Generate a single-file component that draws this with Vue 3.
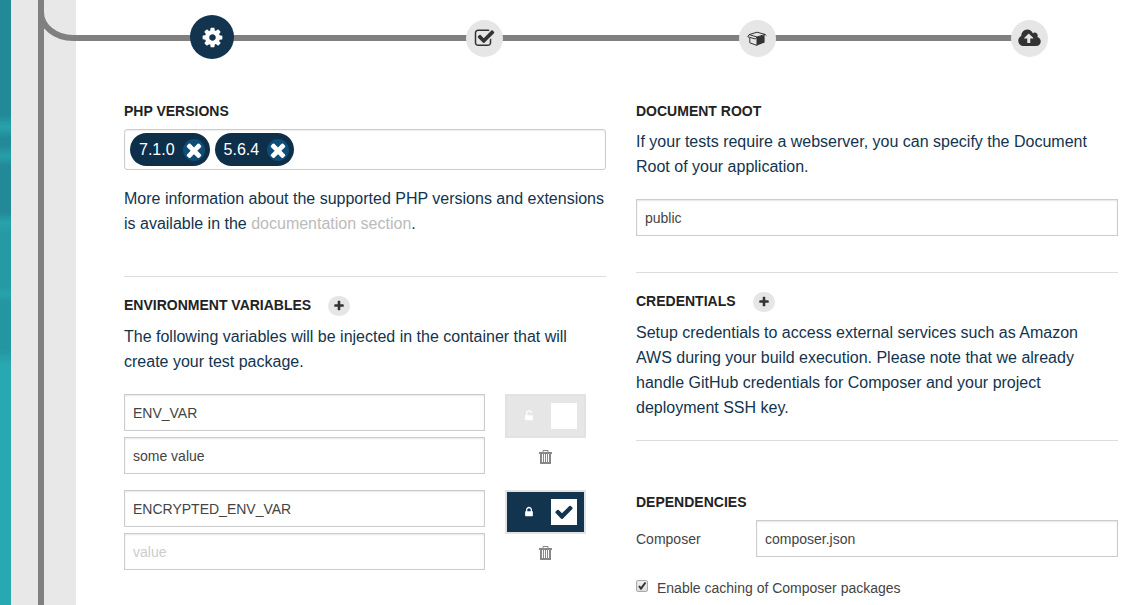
<script setup>
import { ref } from 'vue'

const icons = {
  cog: 'M1152 896q0-106-75-181t-181-75-181 75-75 181 75 181 181 75 181-75 75-181zm512-109v222q0 12-8 23t-20 13l-185 28q-19 54-39 91 35 50 107 138 10 12 10 25t-9 23q-27 37-99 108t-94 71q-12 0-26-9l-138-108q-44 23-91 38-16 136-29 186-7 28-36 28h-222q-14 0-24.5-8.5t-11.5-21.5l-28-184q-49-16-90-37l-141 107q-10 9-25 9-14 0-25-11-126-114-165-168-7-10-7-23 0-12 8-23 15-21 51-66.5t54-70.5q-27-50-41-99l-183-27q-13-2-21-12.5t-8-23.5v-222q0-12 8-23t19-13l186-28q14-46 39-92-40-57-107-138-10-12-10-24 0-10 9-23 26-36 98.5-107.5t94.5-71.5q13 0 26 10l138 107q44-23 91-38 16-136 29-186 7-28 36-28h222q14 0 24.5 8.5t11.5 21.5l28 184q49 16 90 37l142-107q9-9 24-9 13 0 25 10 129 119 165 170 7 8 7 22 0 12-8 23-15 21-51 66.5t-54 70.5q26 50 41 98l183 28q13 2 21 12.5t8 23.5z',
  checkSquare: 'M1472 930v318q0 119-84.5 203.5t-203.5 84.5h-832q-119 0-203.5-84.5t-84.5-203.5v-832q0-119 84.5-203.5t203.5-84.5h832q63 0 117 25 15 7 18 23 3 17-9 29l-49 49q-10 10-23 10-3 0-9-2-23-6-45-6h-832q-66 0-113 47t-47 113v832q0 66 47 113t113 47h832q66 0 113-47t47-113v-254q0-13 9-22l64-64q10-10 23-10 6 0 12 3 20 8 20 29zm231-489l-814 814q-24 24-57 24t-57-24l-430-430q-24-24-24-57t24-57l110-110q24-24 57-24t57 24l263 263 647-647q24-24 57-24t57 24l110 110q24 24 24 57t-24 57z',
  cloud: 'M1216 864q0-14-9-23l-352-352q-9-9-23-9t-23 9l-351 351q-10 12-10 24 0 14 9 23t23 9h224v352q0 13 9.5 22.5t22.5 9.5h192q13 0 22.5-9.5t9.5-22.5v-352h224q13 0 22.5-9.5t9.5-22.5zm640 288q0 159-112.5 271.5t-271.5 112.5h-1088q-185 0-316.5-131.5t-131.5-316.5q0-130 70-240t188-165q-2-30-2-43 0-212 150-362t362-150q156 0 285.5 87t188.5 231q71-62 166-62 106 0 181 75t75 181q0 76-41 138 130 31 213.5 135.5t83.5 238.5z',
  times: 'M1490 1322q0 40-28 68l-136 136q-28 28-68 28t-68-28l-294-294-294 294q-28 28-68 28t-68-28l-136-136q-28-28-28-68t28-68l294-294-294-294q-28-28-28-68t28-68l136-136q28-28 68-28t68 28l294 294 294-294q28-28 68-28t68 28l136 136q28 28 28 68t-28 68l-294 294 294 294q28 28 28 68z',
  check: 'M1671 566q0 40-28 68l-724 724-136 136q-28 28-68 28t-68-28l-136-136-362-362q-28-28-28-68t28-68l136-136q28-28 68-28t68 28l294 295 656-657q28-28 68-28t68 28l136 136q28 28 28 68z',
  plus: 'M1600 736v192q0 40-28 68t-68 28h-416v416q0 40-28 68t-68 28h-192q-40 0-68-28t-28-68v-416h-416q-40 0-68-28t-28-68v-192q0-40 28-68t68-28h416v-416q0-40 28-68t68-28h192q40 0 68 28t28 68v416h416q40 0 68 28t28 68z',
  lock: 'M640 768h512v-192q0-106-75-181t-181-75-181 75-75 181v192zm832 96v576q0 40-28 68t-68 28h-960q-40 0-68-28t-28-68v-576q0-40 28-68t68-28h32v-192q0-184 132-316t316-132 316 132 132 316v192h32q40 0 68 28t28 68z',
  unlock: 'M1376 768q40 0 68 28t28 68v576q0 40-28 68t-68 28h-960q-40 0-68-28t-28-68v-576q0-40 28-68t68-28h32v-292q0-184 132-316t316-132 316 132 132 316h-192q0-106-75-181t-181-75-181 75-75 181v292h736z'
}

const versions = ref(['7.1.0', '5.6.4'])
const variables = ref([
  { name: 'ENV_VAR', value: 'some value', encrypted: false },
  { name: 'ENCRYPTED_ENV_VAR', value: '', encrypted: true }
])
const documentRoot = ref('public')
const composerFile = ref('composer.json')
const caching = ref(true)

const addVariable = () => variables.value.push({ name: '', value: '', encrypted: false })
</script>

<template>
  <div class="page">
    <div class="backdrop"></div>
    <div class="rail"></div>
    <main class="main">
      <nav class="stepper" aria-label="Setup steps">
        <svg class="bend" width="38" height="41" viewBox="0 0 38 41" aria-hidden="true">
          <path d="M3 0V12A32 26 0 0 0 35 38H38" fill="none" stroke="#808080" stroke-width="6" />
        </svg>
        <button class="step active" type="button" aria-label="Settings">
          <svg width="23" height="23" viewBox="0 0 1792 1792"><path :d="icons.cog" /></svg>
        </button>
        <button class="step" type="button" aria-label="Tests">
          <svg width="21" height="21" viewBox="0 0 1792 1792"><path :d="icons.checkSquare" /></svg>
        </button>
        <button class="step" type="button" aria-label="Package">
          <svg width="20" height="16" viewBox="0 0 20 16">
            <path d="M10 6 17.600 4V11.400L10 14.600z" />
            <path d="M2.800 7V11.800L10 14.400V6L2.200 3.600 10 1.200 18 3.400 10 6M2.200 3.600.800 5.800 8.400 8 10 6M18 3.400 19.400 4.600" fill="none" stroke="#333" stroke-width="1" stroke-linejoin="round" />
          </svg>
        </button>
        <button class="step" type="button" aria-label="Deployment">
          <svg width="23" height="21" viewBox="-64 0 1920 1792"><path :d="icons.cloud" /></svg>
        </button>
      </nav>

      <div class="columns">
        <div class="column">
          <section>
            <div class="head"><h2>PHP VERSIONS</h2></div>
            <div class="tags">
              <span v-for="(v, i) in versions" :key="v" class="tag">
                {{ v }}
                <button type="button" :aria-label="'Remove ' + v" @click="versions.splice(i, 1)">
                  <svg width="22" height="22" viewBox="0 0 1792 1792"><path :d="icons.times" /></svg>
                </button>
              </span>
            </div>
            <p class="note">
              More information about the supported PHP versions and extensions is available in the
              <a href="#docs">documentation section</a>.
            </p>
          </section>
          <section class="ruled env">
            <div class="head">
              <h2>ENVIRONMENT VARIABLES</h2>
              <button class="add" type="button" aria-label="Add variable" @click="addVariable">
                <svg width="12" height="12" viewBox="0 0 1792 1792"><path :d="icons.plus" /></svg>
              </button>
            </div>
            <p>The following variables will be injected in the container that will create your test package.</p>
            <div v-for="(item, i) in variables" :key="i" class="variable">
              <div class="fields">
                <input v-model="item.name" class="field" type="text" aria-label="Variable name" placeholder="name">
                <input v-model="item.value" class="field" type="text" aria-label="Variable value" placeholder="value">
              </div>
              <div class="controls">
                <label class="toggle" :class="{ on: item.encrypted }">
                  <svg class="padlock" width="12" height="12" viewBox="0 0 1792 1792">
                    <path :d="item.encrypted ? icons.lock : icons.unlock" />
                  </svg>
                  <span class="square">
                    <input v-model="item.encrypted" type="checkbox" aria-label="Encrypted">
                    <svg v-if="item.encrypted" width="20" height="20" viewBox="0 0 1792 1792"><path :d="icons.check" /></svg>
                  </span>
                </label>
                <button class="remove" type="button" aria-label="Delete variable" @click="variables.splice(i, 1)">
                  <svg width="13" height="14" viewBox="0 0 13 14" fill="none" stroke="#888">
                    <path d="M0 3H13M2 4V13H11V4" stroke-width="2" />
                    <path d="M4 2.500V.500H9V2.500M4.500 4V12M6.500 4V12M8.500 4V12" />
                  </svg>
                </button>
              </div>
            </div>
          </section>
        </div>

        <div class="column">
          <section class="root">
            <div class="head"><h2><label for="root">DOCUMENT ROOT</label></h2></div>
            <p>If your tests require a webserver, you can specify the Document Root of your application.</p>
            <input id="root" v-model="documentRoot" class="field" type="text">
          </section>
          <section class="ruled credentials">
            <div class="head">
              <h2>CREDENTIALS</h2>
              <button class="add" type="button" aria-label="Add credential">
                <svg width="12" height="12" viewBox="0 0 1792 1792"><path :d="icons.plus" /></svg>
              </button>
            </div>
            <p>
              Setup credentials to access external services such as Amazon AWS during your build execution.
              Please note that we already handle GitHub credentials for Composer and your project deployment SSH key.
            </p>
          </section>
          <section class="ruled dependencies">
            <div class="head"><h2>DEPENDENCIES</h2></div>
            <div class="composer">
              <label for="composer">Composer</label>
              <input id="composer" v-model="composerFile" class="field" type="text">
            </div>
            <label class="caching">
              <span class="tick">
                <input v-model="caching" type="checkbox">
                <svg v-if="caching" width="12" height="12" viewBox="0 0 12 12"><path d="M3 6 5 8.500 9.500 2.500" /></svg>
              </span>
              Enable caching of Composer packages
            </label>
          </section>
        </div>
      </div>
    </main>
  </div>
</template>

<style>
html, body { background: #fff; }
</style>

<style scoped>
.page {
  display: flex;
  height: 100vh;
  overflow: hidden;
  font: 14px/20px "Liberation Sans", Arial, sans-serif;
  color: #444;
}
.page * { box-sizing: border-box; }
button { padding: 0; border: 0; background: none; cursor: pointer; }
svg { display: block; }
.backdrop {
  flex: 0 0 11px;
  background: linear-gradient(#228a97 0, #228a97 115px, #27a3ac 127px, #228a97 138px, #228a97 146px, #27a0a9 156px, #228a97 166px, #228a97 212px, #27a3ac 223px, #2599a4 233px, #2599a4 286px, #27a3ac 294px, #2496a1 302px, #2496a1 350px, #28a8b0 364px, #28a8b0 100%);
}
.rail {
  flex: 0 0 65px;
  background: linear-gradient(90deg, #e8e8e8 27px, #808080 27px, #808080 33px, #e8e8e8 33px);
}
.main { flex: 1; min-width: 0; }
.stepper {
  position: relative;
  display: flex;
  justify-content: space-between;
  padding: 15px 89px 0 114px;
}
.stepper::before {
  content: "";
  position: absolute;
  left: 0;
  right: 111px;
  top: 35px;
  height: 6px;
  background: #808080;
}
.bend { position: absolute; left: -38px; top: 0; }
.step {
  position: relative;
  display: flex;
  align-items: center;
  justify-content: center;
  width: 37px;
  height: 37px;
  margin: 5px 3px 2px 4px;
  border-radius: 50%;
  background: #e6e6e6;
  fill: #333;
}
.step.active { width: 44px; height: 44px; margin: 0; background: #12344e; fill: #fff; }
.columns {
  display: grid;
  grid-template-columns: 1fr 1fr;
  gap: 30px;
  padding: 41px 22px 0 48px;
}
.column { min-width: 0; }
.head { display: flex; align-items: center; height: 21px; margin-bottom: 8px; }
h2 { margin: 0; font-size: 14px; line-height: 20px; font-weight: bold; color: #222; }
p { margin: 0 0 20px; font-size: 16px; line-height: 25px; color: #12344e; }
p.note { margin: 16px 0 40px; }
.credentials p { padding-right: 20px; }
a { color: #bbb; text-decoration: none; }
.ruled { border-top: 1px solid #ddd; padding-top: 17px; }
.ruled .head { margin-bottom: 9px; }
.tags {
  display: flex;
  gap: 5px;
  min-height: 41px;
  padding: 3px 5px;
  border: 1px solid #ccc;
  border-radius: 3px;
  box-shadow: inset 0 1px 2px #eee;
}
.tag {
  display: flex;
  align-items: center;
  gap: 8px;
  height: 33px;
  padding: 0 5px 0 9px;
  border-radius: 17px;
  background: #0d2f49;
  color: #fff;
  font-size: 16px;
}
.tag button { width: 22px; height: 22px; border-radius: 50%; background: #0e4d76; fill: #fff; }
.add {
  display: flex;
  align-items: center;
  justify-content: center;
  width: 22px;
  height: 20px;
  margin: 2px 0 0 17px;
  border-radius: 10px;
  background: #e6e6e6;
  fill: #333;
}
.field {
  display: block;
  width: 100%;
  height: 37px;
  padding: 0 8px;
  border: 1px solid #ccc;
  border-radius: 0;
  background: #fff;
  box-shadow: inset 0 1px 2px #e6e6e6;
  color: #444;
  font: inherit;
}
.field::placeholder { color: #ccc; opacity: 1; }
.variable { display: grid; grid-template-columns: 1fr 81px; gap: 20px; margin: 0 20px 16px 0; }
.fields { display: grid; gap: 6px; }
.toggle {
  display: flex;
  align-items: center;
  justify-content: space-between;
  height: 44px;
  padding: 0 7px 0 16px;
  border: 2px solid #e2e2e2;
  background: #e6e6e6;
}
.toggle.on { background: #12344e; }
.padlock { fill: #fff; }
.square { position: relative; width: 26px; height: 26px; }
.square input { display: block; width: 26px; height: 26px; margin: 0; appearance: none; background: #fff; }
.square svg { position: absolute; left: 3px; top: 3px; fill: #12344e; pointer-events: none; }
.remove { display: block; margin: 12px auto 0; }
.root .field { margin-bottom: 36px; }
.dependencies { padding-top: 50px; }
.dependencies .head { margin-bottom: 8px; }
.composer { display: grid; grid-template-columns: 120px 1fr; align-items: center; }
.caching { display: flex; align-items: center; gap: 9px; margin-top: 21px; }
.tick { position: relative; width: 12px; height: 12px; margin-bottom: 4px; }
.tick input {
  display: block;
  width: 12px;
  height: 12px;
  margin: 0;
  appearance: none;
  border: 1px solid #aaa;
  border-radius: 2px;
  background: linear-gradient(#eee, #ddd);
}
.tick svg { position: absolute; left: 0; top: 0; fill: none; stroke: #333; stroke-width: 2; pointer-events: none; }
</style>
